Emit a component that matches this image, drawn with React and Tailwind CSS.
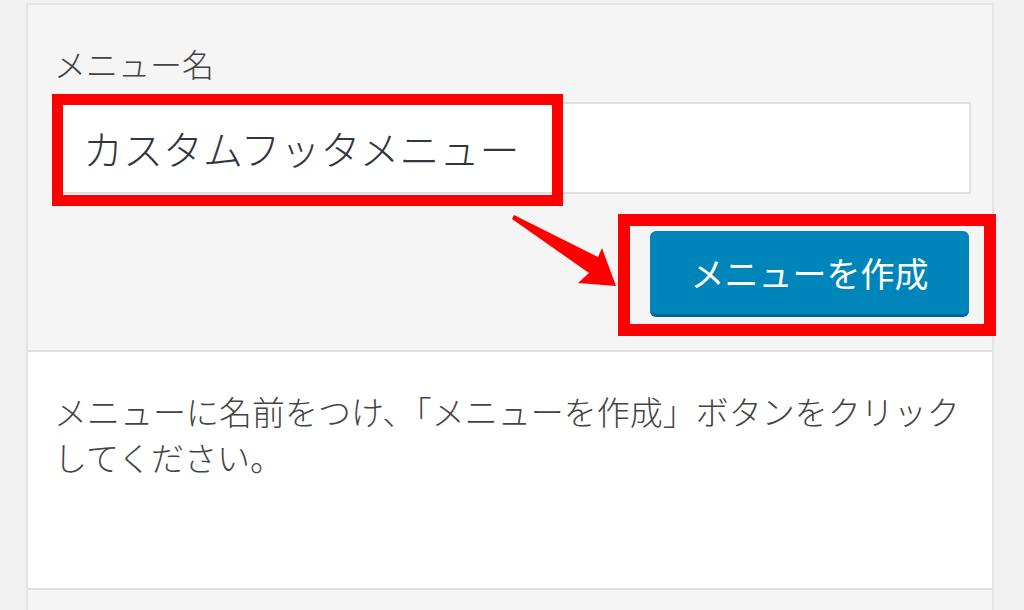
import React from "react";

export default function App() {
  return (
    <div className="relative h-[610px] w-[1024px] overflow-hidden bg-[#f1f1f1] font-['Noto_Sans_CJK_JP','Noto_Sans',sans-serif]">
      <div className="ml-[26px] mt-[3px] w-[968px] border-x-2 border-t-2 border-[#e4e4e4]">
        <div className="h-[345px] bg-[#f5f5f5] pl-[26px] pt-[38px]">
          <div className="h-[40px] text-[32px] font-light leading-[40px] text-[#444]">メニュー名</div>
          <div className="mt-[19px] flex h-[92px] w-[917px] items-center border-2 border-[#e0e0e0] bg-white pl-[27px] text-[40px] font-light text-[#32373c]">
            カスタムフッタメニュー
          </div>
          <div className="mt-[37px] flex w-[915px] justify-end">
            <button className="h-[86px] w-[319px] rounded-[6px] border-b-[3px] border-[#006799] bg-[#0085ba] text-[34px] text-white">
              メニューを作成
            </button>
          </div>
        </div>
        <div className="h-[238px] border-t-2 border-[#e0e0e0] bg-white pl-[26px] pt-[36px] text-[33px] font-light leading-[46px] text-[#444]">
          <p>メニューに名前をつけ、「メニューを作成」ボタンをクリック</p>
          <p>してください。</p>
        </div>
        <div className="h-[30px] border-t-2 border-[#e0e0e0] bg-[#f5f5f5]" />
      </div>

      <div className="absolute left-[52px] top-[94px] h-[112px] w-[511px] border-[11px] border-[#ff0000]" />
      <div className="absolute left-[618px] top-[214px] h-[122px] w-[378px] border-[12px] border-[#ff0000]" />
      <svg className="absolute left-0 top-0" width="1024" height="610" viewBox="0 0 1024 610">
        <polygon
          points="514,215 598,257 602,248 616,286 578,283 589,273 512,219"
          fill="#ff0000"
        />
      </svg>
    </div>
  );
}
